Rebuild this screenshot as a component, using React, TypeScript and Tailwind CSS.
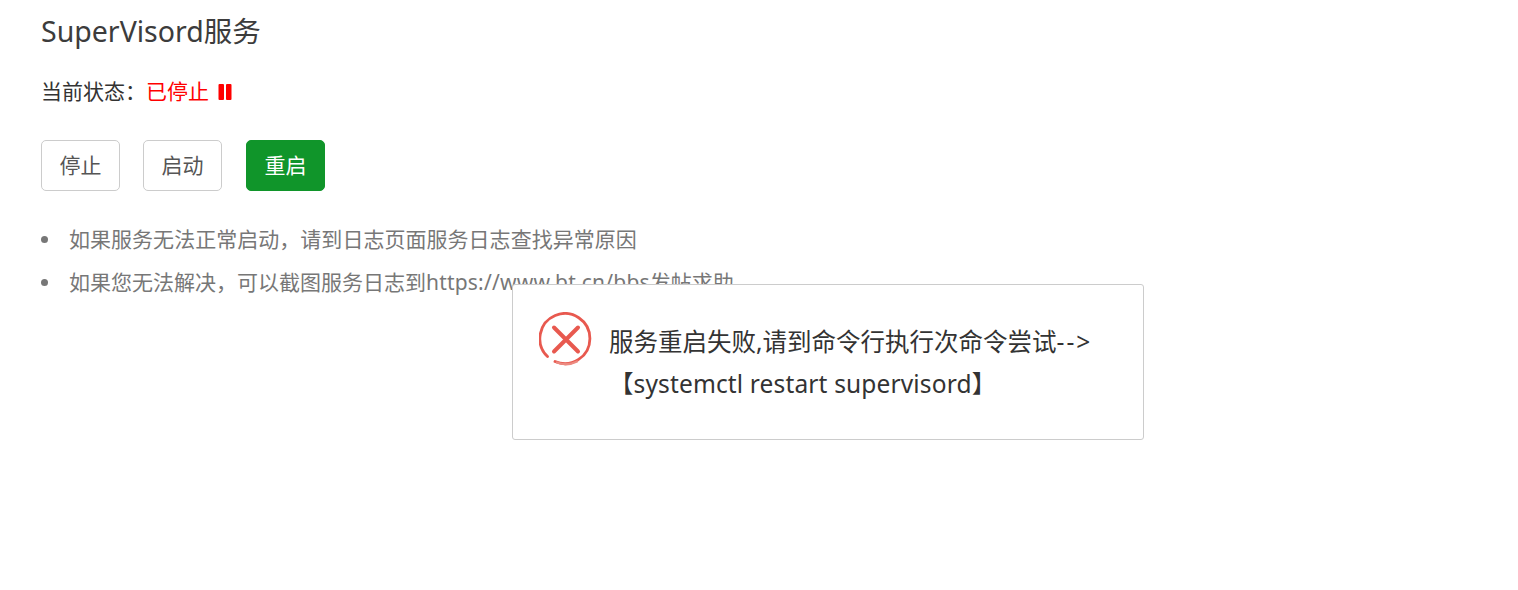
function ErrorIcon() {
  return (
    <svg viewBox="0 0 54 54" className="w-[54px] h-[54px] shrink-0" fill="none">
      <path d="M8.5 44.5A25 25 0 1 1 16 49.5" stroke="#e8594f" strokeWidth="2.8" strokeLinecap="round" />
      <path d="M18 50.5A25 25 0 0 0 38 49.5" stroke="#ec8a80" strokeWidth="2.4" strokeLinecap="round" />
      <path d="M15 15.5L39 39.5M39 15.5L15 39.5" stroke="#e8594f" strokeWidth="4" strokeLinecap="round" />
    </svg>
  )
}

function PauseIcon() {
  return (
    <svg viewBox="0 0 14 16" className="ml-[9px] w-[14px] h-[16px]" fill="#ff0000">
      <rect x="0.5" y="0" width="5.5" height="16" rx="1" />
      <rect x="8" y="0" width="5.5" height="16" rx="1" />
    </svg>
  )
}

export default function App() {
  return (
    <div className="relative h-[590px] overflow-hidden bg-white text-[21px] text-[#333] font-['Noto_Sans','Noto_Sans_CJK_SC',sans-serif]">
      <div className="pl-[41px]">
        {/* 标题 */}
        <h1 className="pt-[11px] text-[28.5px] leading-[40px] text-[#3c3c3c]">SuperVisord服务</h1>

        {/* 状态 */}
        <div className="mt-[20px] flex items-center h-[42px]">
          <span>当前状态：</span>
          <span className="text-[#ff0000]">已停止</span>
          <PauseIcon />
        </div>

        {/* 按钮 */}
        <div className="mt-[27px] flex gap-[23px]">
          <button className="w-[79px] h-[51px] rounded-[5px] border border-[#ccc] bg-white text-[#555]">停止</button>
          <button className="w-[79px] h-[51px] rounded-[5px] border border-[#ccc] bg-white text-[#555]">启动</button>
          <button className="ml-[1px] w-[79px] h-[51px] rounded-[5px] border border-[#10952a] bg-[#10952a] text-white">重启</button>
        </div>

        {/* 提示 */}
        <ul className="mt-[27px] text-[#777]">
          <li className="flex items-center h-[43px]">
            <span className="w-[7px] h-[7px] rounded-full bg-[#777] mr-[21px]" />
            <span className="tracking-[0.03px]">如果服务无法正常启动，请到日志页面服务日志查找异常原因</span>
          </li>
          <li className="flex items-center h-[43px]">
            <span className="w-[7px] h-[7px] rounded-full bg-[#777] mr-[21px]" />
            <span>
              如果您无法解决，可以截图服务日志到<span className="tracking-[0.2px]">https://www.bt.cn/bbs</span>发帖求助
            </span>
          </li>
        </ul>
      </div>

      {/* 弹窗 */}
      <div className="absolute left-[512px] top-[284px] w-[632px] h-[156px] rounded-[3px] border border-[#ccc] bg-white flex items-start pl-[26px] pt-[27px]">
        <ErrorIcon />
        <p className="ml-[16px] mt-[9px] w-[520px] text-[24.5px] leading-[42px] text-[#333]">
          服务重启失败,请到命令行执行次命令尝试<span className="tracking-[2px]">--&gt;</span>
          【<span className="tracking-[0.15px]">systemctl restart supervisord</span>】
        </p>
      </div>
    </div>
  )
}
